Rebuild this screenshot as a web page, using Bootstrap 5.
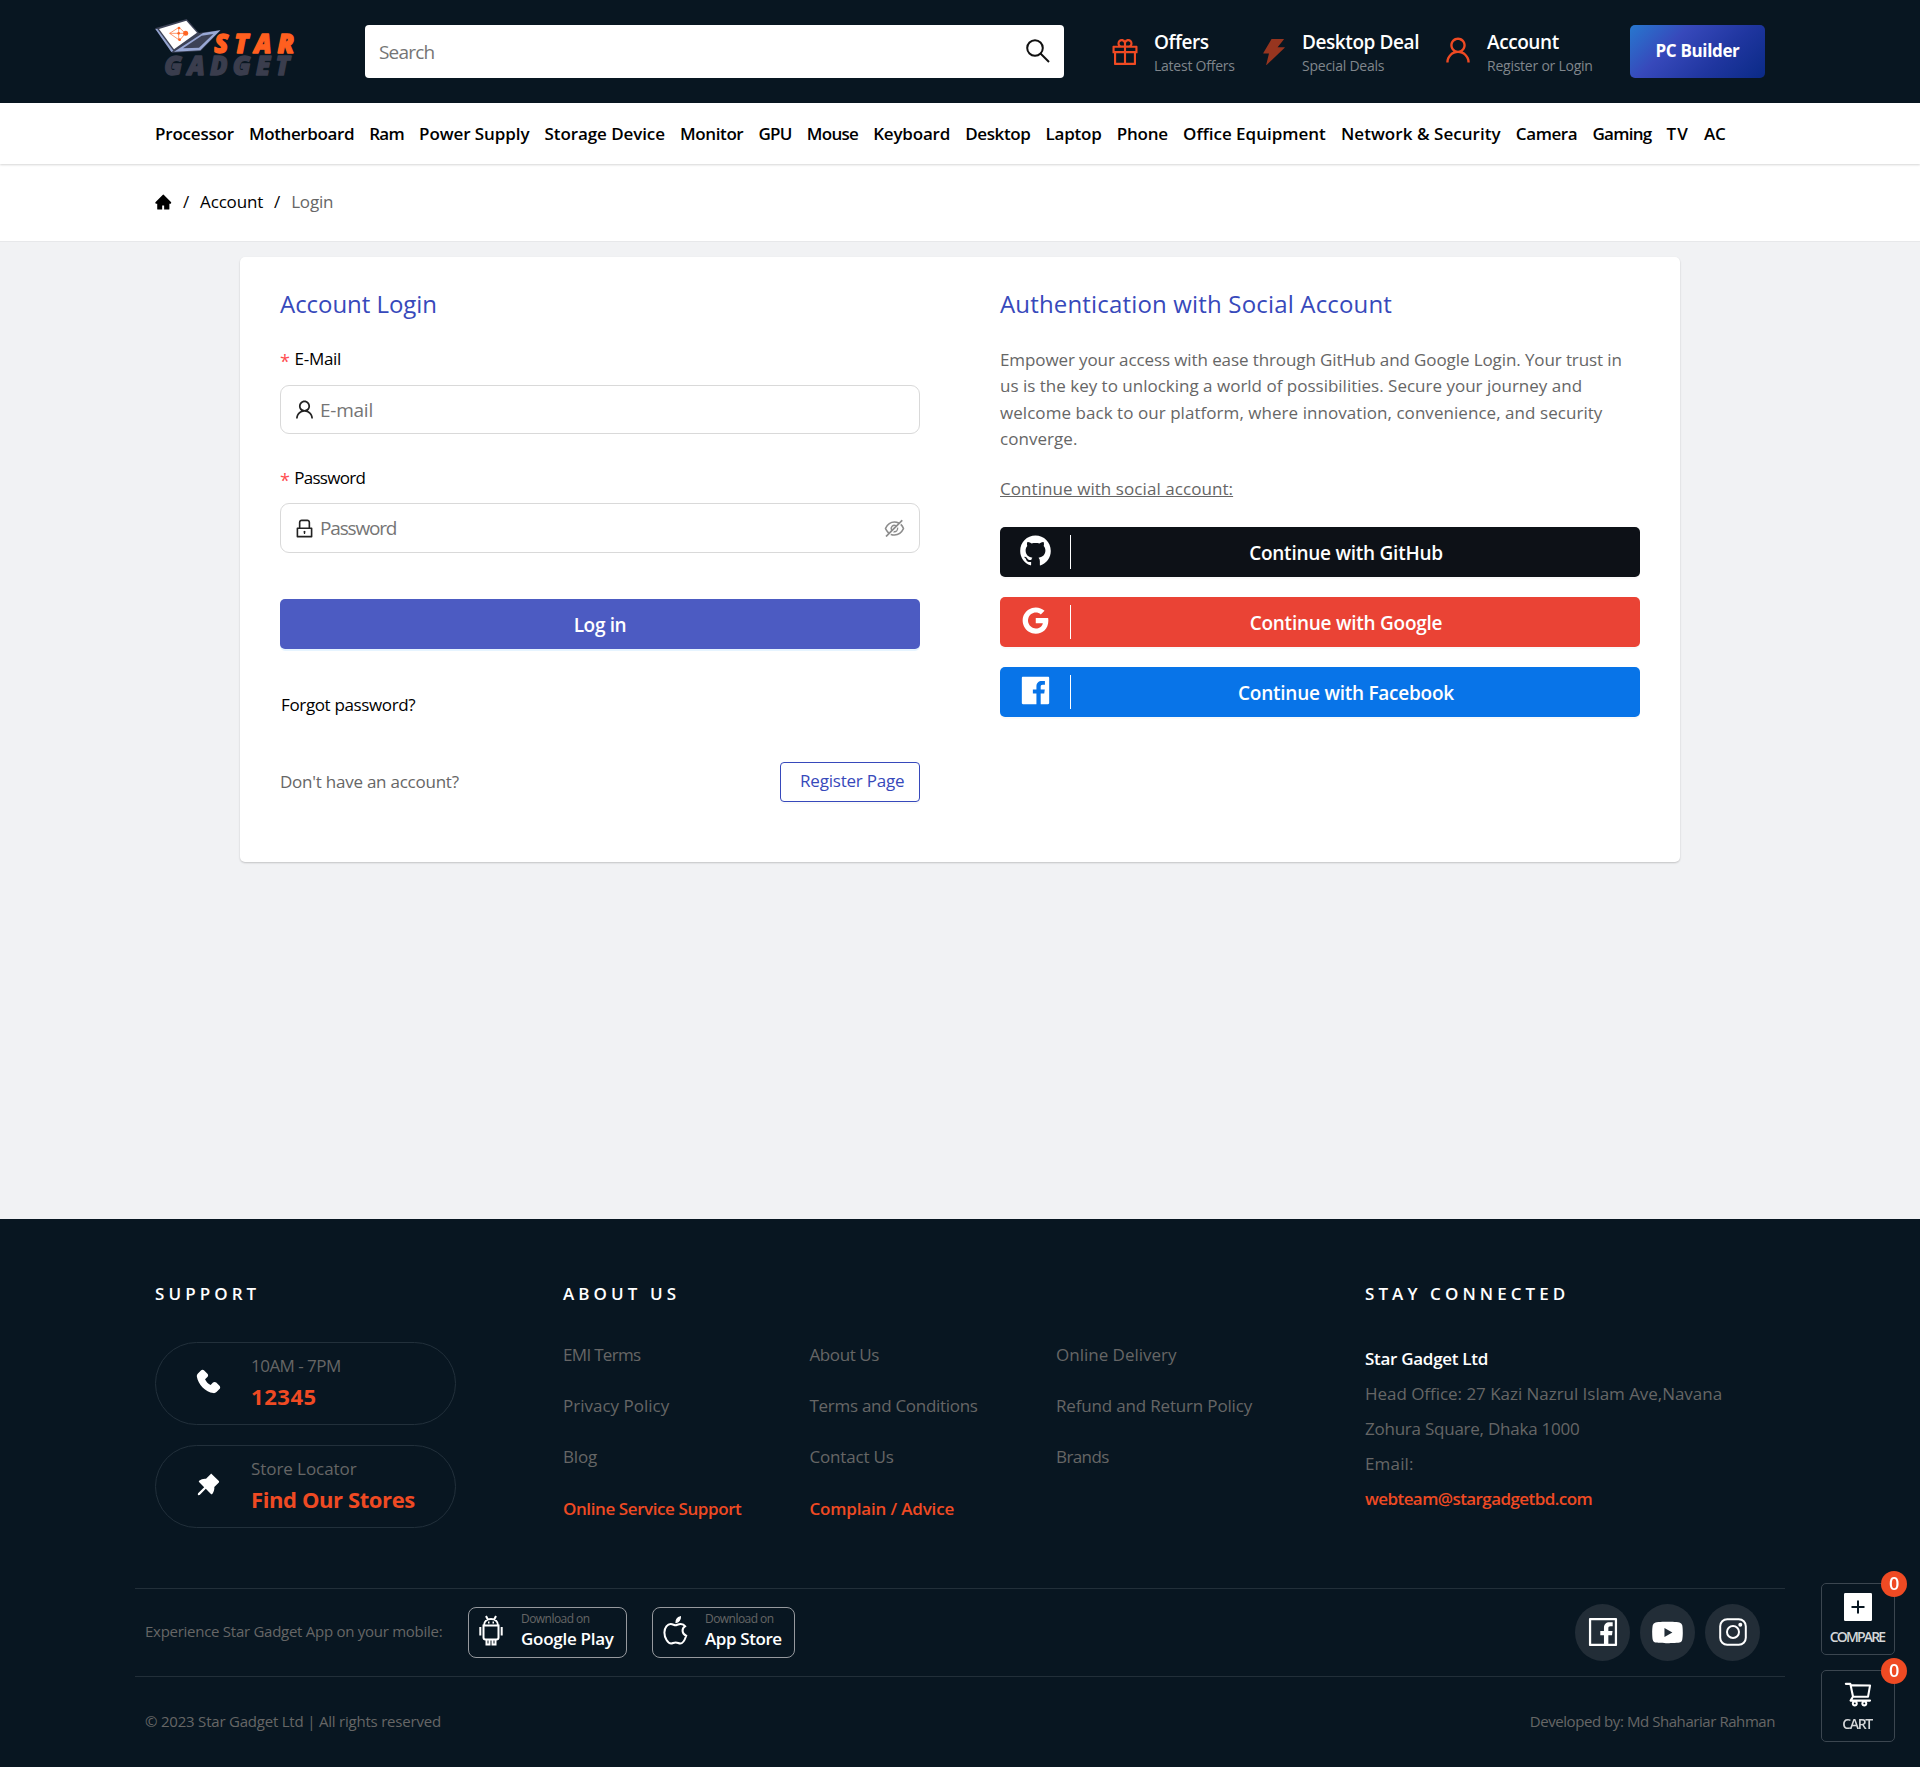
<!DOCTYPE html>
<html lang="en">
<head>
<meta charset="utf-8">
<meta name="viewport" content="width=device-width, initial-scale=1">
<title>Account Login - Star Gadget</title>
<link href="https://cdn.jsdelivr.net/npm/bootstrap@5.3.0/dist/css/bootstrap.min.css" rel="stylesheet">
<style>
  body { font-family: "Trebuchet MS", "Open Sans", sans-serif; font-size: 17px; line-height: 26px; color: #666; background: #f1f2f4; letter-spacing: -.01em; min-height: 1767px; }
  a { text-decoration: none; color: inherit; }
  svg { display: block; flex: none; fill: currentColor; overflow: visible; }
  svg.line { fill: none; stroke: #fff; stroke-width: 2; }
  .wrap { width: 1610px; margin: 0 auto; }
  .semi { font-weight: 600; }
  .accent { color: #ef4a23; }
  .tight { letter-spacing: -.024em; }
  .loose { letter-spacing: 0; }

  .site-head { background: #081621; height: 103px; }
  .logo-box { width: 210px; padding-top: 17px; }
  .search-box { width: 699px; height: 53px; margin-top: 25px; border-radius: 4px; padding: 0 13px 0 14px; }
  .search-box input, .field input { border: 0; outline: 0; background: transparent; font-size: 19px; letter-spacing: -.043em; color: #222; width: 100%; padding: 0; }
  .search-box input::placeholder, .field input::placeholder { color: #757575; opacity: 1; }
  .search-box svg.line { stroke: #111; margin-top: -2px; }
  .head-items { margin-left: 45px; }
  .head-item { padding-top: 30px; gap: 13px; }
  .head-item b { display: block; font-size: 19px; font-weight: 600; color: #fff; line-height: 25px; letter-spacing: -.022em; }
  .head-item small { display: block; font-size: 14px; line-height: 22px; color: #80868c; letter-spacing: -.017em; }
  .head-item svg { margin-top: 6px; }
  .head-item svg.bolt { color: #97351f; }
  .head-item svg.person { margin-top: 4px; }
  .w-offers { width: 149px; } .w-deal { width: 184px; gap: 12px; }
  .btn-pc { width: 135px; height: 53px; margin-top: 25px; border-radius: 5px; font-size: 17px; font-weight: 700; letter-spacing: -.02em; color: #fff; line-height: 51px; text-align: center; background: linear-gradient(135deg, #2778cf 0%, #3749bb 32%, #2036a0 65%, #0a2a86 100%); }

  .main-nav { height: 61px; box-shadow: 0 1px 2px rgba(0,0,0,.16); position: relative; }
  .main-nav .wrap { gap: 15.100px; height: 61px; color: #000; font-weight: 600; padding-top: 1px; white-space: nowrap; letter-spacing: -.012em; }
  .main-nav a:nth-child(2), .main-nav a:nth-child(6), .main-nav a:nth-child(10), .main-nav a:nth-child(15) { letter-spacing: -.023em; }
  .main-nav a:nth-child(3), .main-nav a:nth-child(7), .main-nav a:nth-child(8), .main-nav a:nth-child(16) { letter-spacing: -.042em; }
  .main-nav a:nth-child(4), .main-nav a:nth-child(5) { letter-spacing: -.005em; }
  .main-nav a:nth-child(13) { letter-spacing: 0; }
  .main-nav a:nth-child(14) { letter-spacing: .003em; }
  .main-nav a:nth-child(17) { letter-spacing: .06em; }
  .crumbs { height: 78px; border-bottom: 1px solid #e7e8ea; }
  .crumbs .wrap { height: 76px; color: #000; gap: 11px; }
  .crumbs svg { margin-right: -1px; }
  .crumbs .here { color: #666; }

  .login-card { width: 1440px; height: 605px; margin: 15px auto 357px; padding: 0 40px; border: 0; border-radius: 5px; box-shadow: 0 1px 2px rgba(0,0,0,.2); }
  .login-card .half { width: 640px; }
  .panel-title { color: #3749bb; font-size: 24px; font-weight: 400; line-height: 34px; margin: 30px 0 0; letter-spacing: .007em; }
  .lbl { color: #000; letter-spacing: -.018em; line-height: 26px; height: 26px; gap: 5px; }
  .lbl i { color: #ff4d4f; font-style: normal; font-size: 18px; line-height: 26px; padding-top: 2px; }
  .field { height: 50px; border: 1px solid #d9d9d9; border-radius: 9px; padding: 0 13px 0 12px; gap: 4px; color: #222; margin-top: 13px; }
  .field .eye { color: #8c8c8c; }
  .btn-log { height: 50px; border-radius: 5px; background: #4c5bc2; color: #fff; font-size: 19px; font-weight: 600; line-height: 52px; text-align: center; letter-spacing: -.018em; box-shadow: 0 2px 0 rgba(5,145,255,.1); margin-top: 46px; }
  .btn-reg { width: 140px; height: 40px; border: 1px solid #3749bb; border-radius: 4px; color: #3749bb; line-height: 36px; padding-left: 19px; letter-spacing: -.012em; box-shadow: 0 2px 0 rgba(0,0,0,.02); }
  .social { height: 50px; border-radius: 5px; color: #fff; font-size: 19px; font-weight: 600; letter-spacing: -.013em; margin-bottom: 20px; box-shadow: 0 2px 0 rgba(0,0,0,.02); }
  .social .ico { width: 71px; height: 34px; border-right: 1px solid #fff; display: flex; justify-content: center; align-items: center; }
  .social .ico svg { margin: 0 0 4px 0; }
  .social .txt { flex: 1; text-align: center; padding: 1px 19px 0 0; }
  .bg-github { background: #0d1117; } .bg-google { background: #ea4335; } .bg-facebook { background: #0874e8; }

  .site-foot { background: #081621; height: 548px; }
  .foot-main { display: grid; grid-template-columns: 408px 802px 1fr; height: 369px; padding-top: 60px; }
  .foot-title { color: #fff; font-size: 17px; font-weight: 600; line-height: 30px; letter-spacing: .24em; margin: 0 0 -2px; }
  .pill-box { width: 301px; height: 83px; border: 1px solid #22303b; border-radius: 42px; margin-bottom: 20px; padding-bottom: 6px; }
  .pill-box .pi { width: 95px; padding: 2px 0 0 38px; color: #fff; }
  .pill-box strong { display: block; font-size: 22px; line-height: 30px; letter-spacing: -.018em; color: #ef4a23; }
  .foot-links { display: grid; grid-template-columns: 246.500px 246.500px 1fr; grid-auto-rows: 51.300px; align-items: center; margin-top: 22px; }
  .address { margin-top: 34px; line-height: 35px; letter-spacing: -.002em; }
  .foot-bar { width: 1650px; margin: 0 auto; border-top: 1px solid #222f39; height: 88px; padding: 0 10px; font-size: 15px; letter-spacing: -.018em; }
  .foot-bar .exp { width: 323px; margin-top: -4px; }
  .store { height: 51px; border: 1px solid #96999e; border-radius: 8px; gap: 16px; padding: 0 12px 0 8px; }
  .store svg { margin-top: -3px; }
  .store .lines { margin-top: -6px; }
  .store small { display: block; font-size: 12px; line-height: 18px; letter-spacing: -.045em; }
  .store b { display: block; font-size: 17px; font-weight: 600; line-height: 22px; color: #fff; letter-spacing: -.016em; }
  .circle { width: 55px; height: 57px; border-radius: 50%; background: #222d37; color: #fff; padding-bottom: 1px; }
  .socials { gap: 10px; padding-right: 15px; }

  .dock { position: fixed; right: 25px; top: 1583px; width: 74px; z-index: 10; }
  .dock-item { height: 72px; border: 1px solid #3b4650; border-radius: 5px; background: #081621; color: #fff; margin-bottom: 15px; position: relative; }
  .dock-item span { font-size: 14px; font-weight: 600; line-height: 20px; color: #d4d6d8; letter-spacing: -.13em; padding-right: 2px; }
  .dock-item em { position: absolute; right: -13px; top: -13px; width: 26px; height: 26px; border-radius: 50%; background: #ef4a23; font: 600 18px/24px "Open Sans", sans-serif; text-align: center; color: #fff; }
</style>
<script src="https://cdn.jsdelivr.net/npm/bootstrap@5.3.0/dist/js/bootstrap.bundle.min.js"></script>
</head>
<body>

<header class="site-head">
  <div class="wrap d-flex align-items-start">
    <a class="logo-box" href="#" aria-label="Star Gadget">
      <svg width="142" height="60" viewBox="75 51 426 180">
        <path d="M75 85 170 57 207 99 272 90 212 153 126 158z" fill="#3c4256"/>
        <path d="M87 87 169 62 201 98 132 148z" fill="#fff"/>
        <path d="M76 87 82 87 130 152 124 156z" fill="#93a3cf"/>
        <path d="M132 155 219 99 271 91 211 151z" fill="#98a8d5"/>
        <path d="M159 145 215 107 250 102 207 143z" fill="#3c4256"/>
        <path d="M119 100 147 82 166 100 149 121zM119 100H166M146 82V121" fill="none" stroke="#ff6423" stroke-width="2"/>
        <circle cx="167" cy="100" r="7.500" fill="#ff6423"/><circle cx="147" cy="84" r="4" fill="#ff6423"/><circle cx="149" cy="119" r="4" fill="#ff6423"/><circle cx="146" cy="100" r="4" fill="#ff6423"/>
        <g font-family="Open Sans" font-weight="800" font-style="italic" font-size="77" stroke-width="4" stroke-linejoin="round">
          <text x="253" y="158" textLength="239" fill="#ff5f1f" stroke="#ff5f1f">STAR</text>
          <text x="103" y="224" textLength="376" fill="#3a3d4d" stroke="#3a3d4d">GADGET</text>
        </g>
      </svg>
    </a>
    <label class="search-box bg-white d-flex align-items-center">
      <input type="text" placeholder="Search">
      <svg class="line" width="26" height="26" viewBox="0 0 26 26"><circle cx="10" cy="10" r="7.800"/><path d="M15.500 15.500 24 24"/></svg>
    </label>
    <div class="head-items d-flex">
      <a class="head-item w-offers d-flex" href="#">
        <svg class="accent" width="32" height="32" viewBox="0 0 1024 1024"><path d="M880 310H732.4c13.6-21.4 21.6-46.8 21.6-74 0-76.1-61.900-138-138-138-41.400 0-78.700 18.400-104 47.400-25.300-29-62.600-47.400-104-47.400-76.100 0-138 61.900-138 138 0 27.200 7.900 52.600 21.600 74H144c-17.700 0-32 14.300-32 32v200c0 4.400 3.600 8 8 8h40v344c0 17.700 14.300 32 32 32h640c17.700 0 32-14.300 32-32V550h40c4.400 0 8-3.600 8-8V342c0-17.700-14.300-32-32-32zm-334-74c0-38.600 31.400-70 70-70s70 31.400 70 70-31.400 70-70 70h-70v-70zm-138-70c38.600 0 70 31.400 70 70v70h-70c-38.600 0-70-31.400-70-70s31.400-70 70-70zM180 482V378h298v104H180zm48 68h250v308H228V550zm568 308H546V550h250v308zm48-376H546V378h298v104z"/></svg>
        <div><b>Offers</b><small>Latest Offers</small></div>
      </a>
      <a class="head-item w-deal d-flex" href="#">
        <svg class="bolt" width="32" height="32" viewBox="0 0 1024 1024"><path d="M848 359.3H627.7L825.8 109c4.100-5.300.4-13-6.300-13H436c-2.800 0-5.500 1.500-6.900 4L170 547.500c-3.100 5.300.7 12 6.900 12h174.400l-89.400 357.600c-1.900 7.800 7.500 13.300 13.300 7.700L853.500 373c5.200-4.900 1.700-13.700-5.500-13.700z"/></svg>
        <div><b>Desktop Deal</b><small>Special Deals</small></div>
      </a>
      <a class="head-item d-flex" href="#">
        <svg class="accent person" width="32" height="32" viewBox="0 0 1024 1024"><use href="#i-user"/></svg>
        <div><b>Account</b><small>Register or Login</small></div>
      </a>
    </div>
    <a class="btn-pc ms-auto" href="#">PC Builder</a>
  </div>
</header>

<nav class="main-nav bg-white">
  <div class="wrap d-flex align-items-center">
    <a href="#">Processor</a><a href="#">Motherboard</a><a href="#">Ram</a><a href="#">Power Supply</a><a href="#">Storage Device</a><a href="#">Monitor</a><a href="#">GPU</a><a href="#">Mouse</a><a href="#">Keyboard</a><a href="#">Desktop</a><a href="#">Laptop</a><a href="#">Phone</a><a href="#">Office Equipment</a><a href="#">Network &amp; Security</a><a href="#">Camera</a><a href="#">Gaming</a><a href="#">TV</a><a href="#">AC</a>
  </div>
</nav>

<div class="crumbs bg-white">
  <div class="wrap d-flex align-items-center">
    <svg width="18" height="18" viewBox="40 0 1024 1024"><path d="M946.5 505L534.6 93.400a31.930 31.930 0 00-45.200 0L77.500 505c-12 12-18.800 28.300-18.800 45.300 0 35.300 28.700 64 64 64h43.400V908c0 17.700 14.300 32 32 32H448V716h112v224h265.900c17.700 0 32-14.300 32-32V614.300h43.400c17 0 33.300-6.700 45.300-18.800 24.900-25 24.900-65.500-.1-90.500z"/></svg>
    <span>/</span><a href="#">Account</a><span>/</span><span class="here">Login</span>
  </div>
</div>

<main class="login-card card flex-row justify-content-between">
  <section class="half">
    <h1 class="panel-title" style="letter-spacing:-.002em">Account Login</h1>
    <label class="lbl d-flex" style="margin-top:25px"><i>*</i>E-Mail</label>
    <div class="field d-flex align-items-center" style="height:49px">
      <svg width="23" height="23" viewBox="0 0 1024 1024"><path id="i-user" d="M858.5 763.6a374 374 0 00-80.6-119.5 375.630 375.630 0 00-119.500-80.600c-.4-.2-.8-.3-1.200-.5C719.500 518 760 444.700 760 362c0-137-111-248-248-248S264 225 264 362c0 82.700 40.500 156 102.800 201.100-.4.2-.8.3-1.200.5-44.800 18.900-85 46-119.500 80.600a375.630 375.630 0 00-80.600 119.500A371.700 371.700 0 00136 901.800a8 8 0 008 8.200h60c4.400 0 7.900-3.500 8-7.800 2-77.200 33-149.500 87.800-204.300 56.700-56.700 132-87.900 212.200-87.900s155.500 31.200 212.200 87.900C779 752.700 810 825 812 902.200c.1 4.400 3.600 7.800 8 7.800h60a8 8 0 008-8.200c-1-47.800-10.900-94.300-29.500-138.200zM512 534c-45.900 0-89.100-17.900-121.600-50.400S340 407.900 340 362c0-45.900 17.900-89.100 50.400-121.600S466.100 190 512 190s89.100 17.900 121.600 50.400S684 316.100 684 362c0 45.900-17.900 89.100-50.400 121.600S557.900 534 512 534z"/></svg>
      <input type="text" placeholder="E-mail" style="letter-spacing:-.013em">
    </div>
    <label class="lbl d-flex" style="margin-top:31px;letter-spacing:-.042em"><i>*</i>Password</label>
    <div class="field d-flex align-items-center" style="margin-top:12px">
      <svg width="23" height="23" viewBox="0 0 1024 1024"><path d="M832 464h-68V240c0-70.700-57.300-128-128-128H388c-70.700 0-128 57.300-128 128v224h-68c-17.700 0-32 14.300-32 32v384c0 17.700 14.300 32 32 32h640c17.700 0 32-14.300 32-32V496c0-17.700-14.300-32-32-32zM332 240c0-30.900 25.100-56 56-56h248c30.900 0 56 25.100 56 56v224H332V240zm460 600H232V536h560v304zM484 701v53c0 4.400 3.600 8 8 8h40c4.400 0 8-3.600 8-8v-53a48.010 48.010 0 10-56 0z"/></svg>
      <input type="password" placeholder="Password" style="letter-spacing:-.062em">
      <svg class="eye" width="23" height="23" viewBox="0 0 1024 1024"><path d="M942.2 486.2Q889.470 375.110 816.700 305l-50.880 50.880C807.310 395.530 843.450 447.400 874.700 512 791.500 684.200 673.400 766 512 766q-72.670 0-133.870-22.380L323 798.750Q408 838 512 838q288.300 0 430.200-300.300a60.290 60.290 0 000-51.500zm-63.570-320.640L836 122.880a8 8 0 00-11.320 0L715.310 232.200Q624.860 186 512 186q-288.300 0-430.200 300.300a60.300 60.300 0 000 51.500q56.690 119.400 136.500 191.410L112.480 835a8 8 0 000 11.310L155.170 889a8 8 0 0011.310 0l712.150-712.120a8 8 0 000-11.320zM149.300 512C232.600 339.800 350.700 258 512 258c54.540 0 104.130 9.360 149.120 28.390l-70.300 70.300a176 176 0 00-238.130 238.130l-83.420 83.420C223.100 637.490 183.300 582.280 149.300 512zm246.700 0a112.110 112.110 0 01146.200-106.690L401.310 546.200A112 112 0 01396 512z"/><path d="M508 624c-3.460 0-6.870-.16-10.250-.47l-52.820 52.820a176.090 176.090 0 00227.420-227.420l-52.820 52.820c.31 3.380.47 6.790.47 10.250a111.940 111.940 0 01-112 112z"/></svg>
    </div>
    <a class="btn-log d-block" href="#">Log in</a>
    <div style="margin-top:43px;padding-left:1px"><a class="text-black" style="letter-spacing:-.021em" href="#">Forgot password?</a></div>
    <div class="d-flex justify-content-between align-items-center" style="margin-top:44px">
      <span style="letter-spacing:-.014em">Don't have an account?</span>
      <a class="btn-reg" href="#">Register Page</a>
    </div>
  </section>

  <section class="half">
    <h2 class="panel-title">Authentication with Social Account</h2>
    <p style="margin:26px 0 0;line-height:26.3px;letter-spacing:.003em"><span style="letter-spacing:-.006em">Empower your access with ease through GitHub and Google Login. Your trust in</span><br><span class="loose">us is the key to unlocking a world of possibilities. Secure your journey and</span><br>welcome back to our platform, where innovation, convenience, and security<br>converge.</p>
    <p class="text-decoration-underline" style="margin:24px 0 0;letter-spacing:.004em">Continue with social account:</p>
    <a class="social bg-github d-flex align-items-center" href="#" style="margin-top:25px">
      <span class="ico"><svg width="35" height="35" viewBox="0 0 1024 1024"><path d="M511.6 76.3C264.3 76.2 64 276.4 64 523.5 64 718.9 189.3 885 363.8 946c23.500 5.900 19.900-10.800 19.900-22.200v-77.500c-135.700 15.900-141.200-73.900-150.300-88.900C215 726 171.500 718 184.500 703c30.900-15.900 62.400 4 98.900 57.900 26.400 39.100 77.900 32.500 104 26 5.700-23.500 17.900-44.500 34.700-60.800-140.600-25.200-199.200-111-199.200-213 0-49.500 16.300-95 48.300-131.700-20.400-60.500 1.900-112.300 4.900-120 58.100-5.200 118.500 41.600 123.200 45.300 33-8.900 70.700-13.600 112.900-13.600 42.400 0 80.200 4.900 113.500 13.900 11.300-8.600 67.300-48.800 121.300-43.900 2.900 7.700 24.700 58.300 5.500 118 32.400 36.800 48.900 82.700 48.900 132.300 0 102.200-59 188.100-200 212.900a127.500 127.500 0 0138.100 91v112.500c.8 9 0 17.900 15 17.900 177.100-59.700 304.600-227 304.600-424.100 0-247.200-200.400-447.300-447.500-447.300z"/></svg></span><span class="txt">Continue with GitHub</span></a>
    <a class="social bg-google d-flex align-items-center" href="#">
      <span class="ico"><svg width="35" height="35" viewBox="0 0 1024 1024"><path d="M881 442.4H519.7v148.5h206.4c-8.900 48-35.900 88.600-76.600 115.800-34.400 23-78.300 36.600-129.900 36.600-99.900 0-184.400-67.500-214.600-158.200-7.600-23-12-47.600-12-72.900s4.400-49.900 12-72.900c30.300-90.600 114.800-158.100 214.700-158.100 56.300 0 106.800 19.400 146.600 57.400l110-110.100c-66.500-62-153.200-100-256.600-100-149.900 0-279.600 86-342.700 211.400-26 51.800-40.800 110.400-40.800 172.400S151 632.800 177 684.600C240.100 810 369.800 896 519.700 896c103.600 0 190.400-34.400 253.800-93 72.500-66.800 114.400-165.200 114.400-282.100 0-27.200-2.400-53.300-6.900-78.500z"/></svg></span><span class="txt">Continue with Google</span></a>
    <a class="social bg-facebook d-flex align-items-center" href="#">
      <span class="ico"><svg width="35" height="35" viewBox="0 0 1024 1024"><path d="M880 112H144c-17.700 0-32 14.300-32 32v736c0 17.700 14.300 32 32 32h736c17.700 0 32-14.300 32-32V144c0-17.700-14.300-32-32-32zm-92.400 233.500h-63.900c-50.100 0-59.800 23.800-59.800 58.800v77.100h119.600l-15.600 120.700h-104V912H539.200V602.200H434.900V481.400h104.300v-89c0-103.300 63.100-159.600 155.300-159.600 44.200 0 82.100 3.300 93.200 4.800v107.900z"/></svg></span><span class="txt">Continue with Facebook</span></a>
  </section>
</main>

<footer class="site-foot">
  <div class="wrap foot-main">
    <section>
      <h3 class="foot-title">SUPPORT</h3>
      <a class="pill-box d-flex align-items-center" href="#" style="margin-top:35px">
        <span class="pi"><svg width="29" height="29" viewBox="0 0 1024 1024"><path transform="matrix(-1 0 0 1 1024 0)" d="M885.6 230.2L779.1 123.8a80.830 80.830 0 00-57.300-23.800c-21.700 0-42.100 8.500-57.400 23.800L549.800 238.400a80.830 80.830 0 00-23.800 57.300c0 21.700 8.500 42.100 23.800 57.400l83.800 83.800A393.820 393.820 0 01553.100 553 395.340 395.340 0 01437 633.800L353.200 550a80.830 80.830 0 00-57.300-23.800c-21.700 0-42.100 8.500-57.400 23.800L123.800 664.500a80.890 80.890 0 00-23.800 57.400c0 21.700 8.500 42.100 23.800 57.400l106.300 106.300c24.400 24.500 58.100 38.400 92.700 38.400 7.300 0 14.300-.6 21.200-1.800 134.800-22.200 268.500-93.900 376.400-201.700C828.200 612.800 899.800 479.200 922.300 344c6.800-41.300-6.900-83.800-36.700-113.800z"/></svg></span>
        <span><span class="d-block" style="line-height:30px;letter-spacing:-.031em">10AM - 7PM</span><strong style="letter-spacing:.026em">12345</strong></span>
      </a>
      <a class="pill-box d-flex align-items-center" href="#">
        <span class="pi"><svg width="29" height="29" viewBox="0 0 1024 1024"><path d="M878.3 392.1L631.9 145.7c-6.500-6.500-15-9.700-23.500-9.700s-17 3.200-23.500 9.700L423.800 306.900c-12.200-1.400-24.500-2-36.800-2-73.200 0-146.400 24.100-206.500 72.300-15.400 12.300-16.600 35.400-2.700 49.400l181.700 181.700-215.400 215.200a15.800 15.800 0 00-4.600 9.800l-3.400 37.200c-.9 9.400 6.600 17.400 15.900 17.400.5 0 1 0 1.500-.1l37.200-3.400c3.700-.3 7.200-2 9.800-4.600l215.400-215.400 181.700 181.700c6.500 6.500 15 9.700 23.500 9.700 9.700 0 19.300-4.200 25.900-12.400 56.300-70.300 79.700-158.300 70.200-243.400l161.100-161.100c12.900-12.800 12.900-33.800 0-46.800z"/></svg></span>
        <span><span class="d-block" style="line-height:30px;letter-spacing:-.004em">Store Locator</span><strong>Find Our Stores</strong></span>
      </a>
    </section>
    <section>
      <h3 class="foot-title">ABOUT US</h3>
      <div class="foot-links">
        <a style="letter-spacing:-.04em" href="#">EMI Terms</a><a class="tight" href="#">About Us</a><a class="loose" href="#">Online Delivery</a>
        <a class="loose" href="#">Privacy Policy</a><a style="letter-spacing:-.017em" href="#">Terms and Conditions</a><a href="#">Refund and Return Policy</a>
        <a href="#">Blog</a><a href="#">Contact Us</a><a style="letter-spacing:-.035em" href="#">Brands</a>
        <a class="accent semi tight" href="#">Online Service Support</a><a class="accent semi" href="#">Complain / Advice</a>
      </div>
    </section>
    <section>
      <h3 class="foot-title">STAY CONNECTED</h3>
      <div class="address">
        <div class="text-white semi" style="letter-spacing:-.017em">Star Gadget Ltd</div>
        <div>Head Office: 27 Kazi Nazrul Islam Ave,Navana</div>
        <div style="letter-spacing:-.014em">Zohura Square, Dhaka 1000</div>
        <div style="letter-spacing:.01em">Email:</div>
        <a class="accent semi" style="letter-spacing:-.034em" href="#">webteam@stargadgetbd.com</a>
      </div>
    </section>
  </div>
  <div class="foot-bar d-flex align-items-center">
    <span class="exp">Experience Star Gadget App on your mobile:</span>
    <a class="store d-flex align-items-center" style="width:159px" href="#">
      <svg class="line" width="28" height="32" viewBox="0 0 28 32"><path d="M7 10.500C7 6.500 10 4 14 4s7 2.500 7 6.500zM6.500 10.500h15v12a2 2 0 0 1-2 2h-11a2 2 0 0 1-2-2zM9 1l1.800 3.500M19 1l-1.800 3.500M3.300 12v8.500M24.700 12v8.500M9.500 25v4.500h3V25M15.500 25v4.500h3V25"/><path d="M11 7.500h1.500M15.500 7.500H17"/></svg>
      <span class="lines"><small>Download on</small><b>Google Play</b></span>
    </a>
    <a class="store d-flex align-items-center" style="width:143px;margin-left:25px" href="#">
      <svg class="line" width="28" height="32" viewBox="0 0 28 32"><path d="M14.500 10.300c1.300 0 2.800-1.400 5.200-1.400 2.200 0 3.700 1.100 4.500 2.300-3.900 2.500-3.400 7.700 1 9.500-1.100 3.400-3.400 7.800-6 7.800-1.700 0-2.300-1.100-4.500-1.100s-2.900 1.100-4.600 1.100c-3.200 0-6.700-5.600-6.700-11 0-5.200 3.200-8.500 6.300-8.500 2 0 3.500 1.300 4.800 1.300z"/><path d="M15 7.500c0-2.900 1.900-5.100 4.400-5.700.1 2.800-1.900 5.400-4.400 5.700z" style="stroke-width:1.200;fill:#fff"/></svg>
      <span class="lines"><small>Download on</small><b style="letter-spacing:-.024em">App Store</b></span>
    </a>
    <div class="socials ms-auto d-flex">
      <a class="circle d-flex align-items-center justify-content-center" href="#"><svg width="36" height="36" viewBox="0 0 1024 1024"><path d="M880 112H144c-17.700 0-32 14.300-32 32v736c0 17.700 14.300 32 32 32h736c17.700 0 32-14.300 32-32V144c0-17.700-14.300-32-32-32zm-32 736H663.900V602.200h104l15.600-120.700H663.900v-77.100c0-35 9.700-58.800 59.800-58.800h63.900v-108c-11.100-1.500-49-4.800-93.200-4.800-92.200 0-155.300 56.300-155.300 159.600v89H434.900v120.700h104.300V848H176V176h672v672z"/></svg></a>
      <a class="circle d-flex align-items-center justify-content-center" href="#"><svg width="35" height="35" viewBox="0 0 1024 1024"><path d="M941.3 296.1a112.300 112.300 0 00-79.200-79.300C792.200 198 512 198 512 198s-280.200 0-350.100 18.700A112.120 112.120 0 0082.700 296C64 366 64 512 64 512s0 146 18.700 215.900c10.300 38.600 40.700 69 79.200 79.300C231.800 826 512 826 512 826s280.200 0 350.100-18.800c38.600-10.300 68.900-40.700 79.200-79.300C960 658 960 512 960 512s0-146-18.700-215.900zM423 646V378l232 133-232 135z"/></svg></a>
      <a class="circle d-flex align-items-center justify-content-center" href="#"><svg class="line" width="30" height="30" viewBox="0 0 30 30"><rect x="2.200" y="2.200" width="25.600" height="25.600" rx="7"/><circle cx="15" cy="15" r="6"/><circle cx="22.300" cy="7.700" r="1"/></svg></a>
    </div>
  </div>
  <div class="foot-bar d-flex align-items-center justify-content-between">
    <span style="letter-spacing:-.014em">© 2023 Star Gadget Ltd | All rights reserved</span>
    <span style="letter-spacing:-.029em">Developed by: Md Shahariar Rahman</span>
  </div>
</footer>

<aside class="dock">
  <a class="dock-item d-flex flex-column align-items-center" href="#" style="padding-top:9px">
    <svg width="28" height="28" viewBox="0 0 28 28"><rect width="28" height="28" rx="1.200" fill="#fff"/><path d="M14 7.500v13M7.500 14h13" stroke="#081621" stroke-width="2"/></svg>
    <span style="margin-top:6px">COMPARE</span><em>0</em>
  </a>
  <a class="dock-item d-flex flex-column align-items-center" href="#" style="padding-top:8px">
    <svg width="30" height="30" viewBox="0 0 1024 1024"><path d="M922.9 701.9H327.4l29.900-60.900 496.800-.9c16.800 0 31.200-12 34.200-28.600l68.800-385.100c1.800-10.100-.9-20.500-7.500-28.400a34.990 34.990 0 00-26.600-12.500l-632-2.100-5.400-25.400c-3.400-16.200-18-28-34.600-28H96.500a35.300 35.300 0 100 70.600h125.900L246 312.800l58.100 281.300-74.800 122.100a34.960 34.960 0 00-3 36.800c6 11.900 18.100 19.400 31.500 19.400h62.800a102.430 102.430 0 00-20.600 61.700c0 56.600 46 102.600 102.600 102.600s102.600-46 102.600-102.600c0-22.300-7.400-44-20.600-61.700h161.100a102.430 102.430 0 00-20.600 61.700c0 56.600 46 102.600 102.600 102.600s102.600-46 102.600-102.600c0-22.300-7.400-44-20.600-61.700H923c19.400 0 35.300-15.800 35.300-35.300a35.420 35.420 0 00-35.400-35.200zM305.700 253l575.800 1.900-56.400 315.800-452.300.8L305.700 253zm96.900 612.700c-17.400 0-31.600-14.200-31.600-31.600 0-17.400 14.200-31.600 31.600-31.600s31.600 14.200 31.600 31.600a31.600 31.600 0 01-31.600 31.600zm325.100 0c-17.400 0-31.600-14.200-31.600-31.600 0-17.400 14.200-31.600 31.600-31.600s31.600 14.200 31.600 31.600a31.600 31.600 0 01-31.600 31.600z"/></svg>
    <span style="margin-top:5px;letter-spacing:-.1em">CART</span><em>0</em>
  </a>
</aside>
</body>
</html>
